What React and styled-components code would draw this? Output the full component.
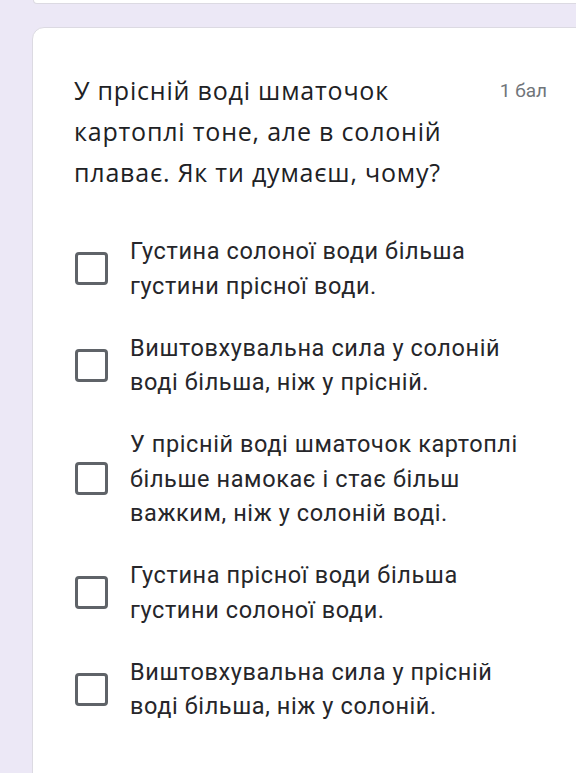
import styled, { createGlobalStyle } from "styled-components";

const GlobalStyle = createGlobalStyle`
  html, body {
    margin: 0;
    padding: 0;
    background: #ece8f6;
    overflow-x: hidden;
  }
`;

const options = [
  "Густина солоної води більша густини прісної води.",
  "Виштовхувальна сила у солоній воді більша, ніж у прісній.",
  "У прісній воді шматочок картоплі більше намокає і стає більш важким, ніж у солоній воді.",
  "Густина прісної води більша густини солоної води.",
  "Виштовхувальна сила у прісній воді більша, ніж у солоній.",
];

function App() {
  return (
    <Page>
      <GlobalStyle />
      <PrevCard />
      <Card>
        <Header>
          <Question>
            У прісній воді шматочок картоплі тоне, але в солоній плаває. Як ти
            думаєш, чому?
          </Question>
          <Points>1 бал</Points>
        </Header>
        <Options>
          {options.map((text) => (
            <Option key={text}>
              <Box />
              <Label>{text}</Label>
            </Option>
          ))}
        </Options>
      </Card>
    </Page>
  );
}

export default App;

const Page = styled.div`
  min-height: 773px;
  padding-left: 32px;
  margin-right: -16px;
`;

const PrevCard = styled.div`
  height: 3px;
  margin-left: 1px;
  background: #fff;
  border: 1px solid #dcdae2;
  border-top: none;
  border-radius: 0 0 10px 10px;
`;

const Card = styled.div`
  margin-top: 23px;
  background: #fff;
  border: 1px solid #dcdae2;
  border-radius: 12px;
  padding: 42px 44px 60px 41px;
  min-height: 700px;
`;

const Header = styled.div`
  display: flex;
  justify-content: space-between;
  align-items: flex-start;
`;

const Question = styled.div`
  width: 400px;
  font-family: "Open Sans", "Noto Sans", sans-serif;
  font-size: 25px;
  letter-spacing: 0.8px;
  line-height: 41px;
  color: #202124;
`;

const Points = styled.div`
  padding-top: 9px;
  font-family: Roboto, "Liberation Sans", sans-serif;
  font-size: 19px;
  color: #70757a;
`;

const Options = styled.div`
  display: flex;
  flex-direction: column;
  gap: 27.5px;
  margin-top: 41px;
`;

const Option = styled.div`
  display: flex;
  align-items: center;
  gap: 22px;
`;

const Box = styled.div`
  flex: none;
  width: 27px;
  height: 27px;
  margin-left: 1px;
  border: 3px solid #5f6368;
  border-radius: 4px;
`;

const Label = styled.div`
  width: 405px;
  font-family: Roboto, "Liberation Sans", sans-serif;
  font-size: 23.5px;
  letter-spacing: 0.6px;
  line-height: 34.5px;
  color: #26262a;
`;
